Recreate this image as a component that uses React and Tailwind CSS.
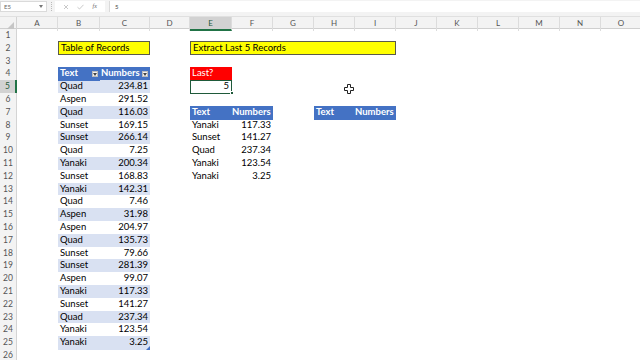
import React from "react";

const COLS = ["A","B","C","D","E","F","G","H","I","J","K","L","M","N","O"];
const GRID = "grid grid-cols-[17px_41px_42px_50px_40px_42px_41px_41px_41px_41px_41px_41px_41px_41px_41px_41px]";

const T = "text-[9.5px] leading-[12.8px] whitespace-nowrap overflow-visible";

function FilterBtn() {
  return (
    <span className="absolute right-[2px] top-[3.5px] w-[6.5px] h-[6.5px] bg-[#f2f2f2] border border-[#bcbcbc] flex items-center justify-center">
      <svg width="4" height="3" viewBox="0 0 4 3"><path d="M0 0H4L2 3Z" fill="#444" /></svg>
    </span>
  );
}

const data = [
  ["Quad","234.81"],["Aspen","291.52"],["Quad","116.03"],["Sunset","169.15"],["Sunset","266.14"],
  ["Quad","7.25"],["Yanaki","200.34"],["Sunset","168.83"],["Yanaki","142.31"],["Quad","7.46"],
  ["Aspen","31.98"],["Aspen","204.97"],["Quad","135.73"],["Sunset","79.66"],["Sunset","281.39"],
  ["Aspen","99.07"],["Yanaki","117.33"],["Sunset","141.27"],["Quad","237.34"],["Yanaki","123.54"],["Yanaki","3.25"],
];
const last5 = [["Yanaki","117.33"],["Sunset","141.27"],["Quad","237.34"],["Yanaki","123.54"],["Yanaki","3.25"]];

function buildRows() {
  const rows = {};
  rows[2] = {
    B: { span: 2, cls: `col-span-2 bg-[#ffff00] border border-[#5a5a4a] pl-[2px] ${T} h-[14px] -mt-[0.5px]`, content: "Table of Records" },
    E: { span: 5, cls: `col-span-5 bg-[#ffff00] border border-[#5a5a4a] pl-[2px] ${T} h-[14px] -mt-[0.5px]`, content: "Extract Last 5 Records" },
  };
  rows[4] = {
    B: { cls: `relative bg-[#4472c4] text-white font-bold pl-[2px] ${T}`, content: <>Text<FilterBtn /></> },
    C: { cls: `relative bg-[#4472c4] text-white font-bold pl-[1px] ${T}`, content: <>Numbers<FilterBtn /></> },
    E: { cls: `bg-[#ff0000] text-white pl-[2px] ${T}`, content: "Last?" },
  };
  data.forEach((d, i) => {
    const n = 5 + i;
    const band = i % 2 === 0;
    rows[n] = {
      B: { cls: `${band ? "bg-[#d9e1f2]" : "bg-white"} text-black pl-[2px] ${T}`, content: d[0] },
      C: {
        cls: `relative ${band ? "bg-[#d9e1f2]" : "bg-white"} text-black text-right pr-[2px] ${T}`,
        content: n === 25 ? <>{d[1]}<svg className="absolute right-0 bottom-0" width="4" height="4" viewBox="0 0 4 4"><path d="M4 0V4H0Z" fill="#4472c4" /></svg></> : d[1],
      },
    };
  });
  rows[5].E = {
    cls: `relative border-[1.5px] border-[#1f5a3a] bg-white text-black text-right pr-[2px] text-[9.5px] leading-[10px] whitespace-nowrap`,
    content: <>5<span className="absolute -right-[2.5px] -bottom-[2.5px] w-[4px] h-[4px] bg-[#1f5a3a] border border-white" /></>,
  };
  rows[7].E = { cls: `bg-[#4472c4] text-white font-bold pl-[2px] ${T}`, content: "Text" };
  rows[7].F = { cls: `bg-[#4472c4] text-white font-bold text-right pr-[3px] ${T}`, content: "Numbers" };
  rows[7].H = { cls: `bg-[#4472c4] text-white font-bold pl-[2px] ${T}`, content: "Text" };
  rows[7].I = { cls: `bg-[#4472c4] text-white font-bold text-right pr-[3px] ${T}`, content: "Numbers" };
  last5.forEach((d, i) => {
    const n = 8 + i;
    rows[n].E = { cls: `text-black pl-[2px] ${T}`, content: d[0] };
    rows[n].F = { cls: `text-black text-right pr-[2px] ${T}`, content: d[1] };
  });
  return rows;
}

function Row({ n, cells }) {
  const out = [];
  for (let i = 0; i < COLS.length; i++) {
    const c = cells && cells[COLS[i]];
    if (c) {
      out.push(<div key={COLS[i]} className={c.cls}>{c.content}</div>);
      i += (c.span || 1) - 1;
    } else {
      out.push(<div key={COLS[i]} />);
    }
  }
  const active = n === 5;
  return (
    <div className={`${GRID} h-[12.8px]`}>
      <div className={`text-[8.5px] leading-[12.8px] text-center border-b border-[#e2e2e2] ${active ? "bg-[#d2d2d2] text-[#1f5a3a] border-r-2 border-r-[#217346]" : "bg-[#f3f3f3] text-[#555] border-r border-r-[#d4d4d4]"}`}>
        {n}
      </div>
      {out}
    </div>
  );
}

export default function App() {
  const rows = buildRows();
  const nums = Array.from({ length: 26 }, (_, i) => i + 1);
  return (
    <div className="w-[640px] h-[360px] overflow-hidden bg-white relative font-['Lato','Liberation_Sans',sans-serif]">
      {/* Formula bar */}
      <div className="h-[17px] bg-[#f3f3f3] flex items-start pt-[1px] border-b border-[#e0e0e0]">
        <div className="w-[47px] h-[11px] bg-white border border-[#dadada] flex items-center justify-between px-[3px]">
          <span className="text-[6px] text-[#666]">E5</span>
          <svg width="4" height="3" viewBox="0 0 4 3"><path d="M0 0H4L2 3Z" fill="#777" /></svg>
        </div>
        <div className="w-[8px] flex justify-center pt-[1px]">
          <div className="w-[1px] h-[9px] border-l border-dotted border-[#bbb]" />
        </div>
        <div className="w-[50px] h-[11px] bg-white flex items-center justify-around px-[4px] text-[#aaa]">
          <svg width="6" height="6" viewBox="0 0 6 6"><path d="M1 1L5 5M5 1L1 5" stroke="#bbb" strokeWidth="0.8" /></svg>
          <svg width="7" height="6" viewBox="0 0 7 6"><path d="M0.5 3.2L2.5 5L6.5 0.8" stroke="#bbb" strokeWidth="0.8" fill="none" /></svg>
          <span className="text-[6px] italic text-[#666] font-['Liberation_Serif',serif]">fx</span>
        </div>
        <div className="w-[4px]" />
        <div className="flex-1 h-[11px] bg-white border-l border-[#dadada] flex items-center pl-[5px]">
          <span className="text-[6px] text-[#444]">5</span>
        </div>
      </div>
      {/* Column headers */}
      <div className={`${GRID} h-[12px] bg-[#f3f3f3] border-b border-[#cfcfcf]`}>
        <div className="relative border-r border-[#d4d4d4]">
          <svg className="absolute right-[2px] bottom-[2px]" width="7" height="7" viewBox="0 0 7 7"><path d="M7 0V7H0Z" fill="#c6c6c6" /></svg>
        </div>
        {COLS.map((c) => (
          <div
            key={c}
            className={`text-[8px] leading-[12px] text-center border-r border-[#dcdcdc] ${c === "E" ? "bg-[#d2d2d2] text-[#1f5a3a] border-b-2 border-b-[#217346]" : "text-[#555]"}`}
          >
            {c}
          </div>
        ))}
      </div>
      {/* Rows */}
      {nums.map((n) => (
        <Row key={n} n={n} cells={rows[n]} />
      ))}
      {/* Mouse cursor */}
      <svg className="absolute left-[344px] top-[84px]" width="10" height="10" viewBox="0 0 10 10">
        <path d="M3.5 0.5H6.5V3.5H9.5V6.5H6.5V9.5H3.5V6.5H0.5V3.5H3.5Z" fill="#fff" stroke="#222" strokeWidth="1" />
      </svg>
    </div>
  );
}
